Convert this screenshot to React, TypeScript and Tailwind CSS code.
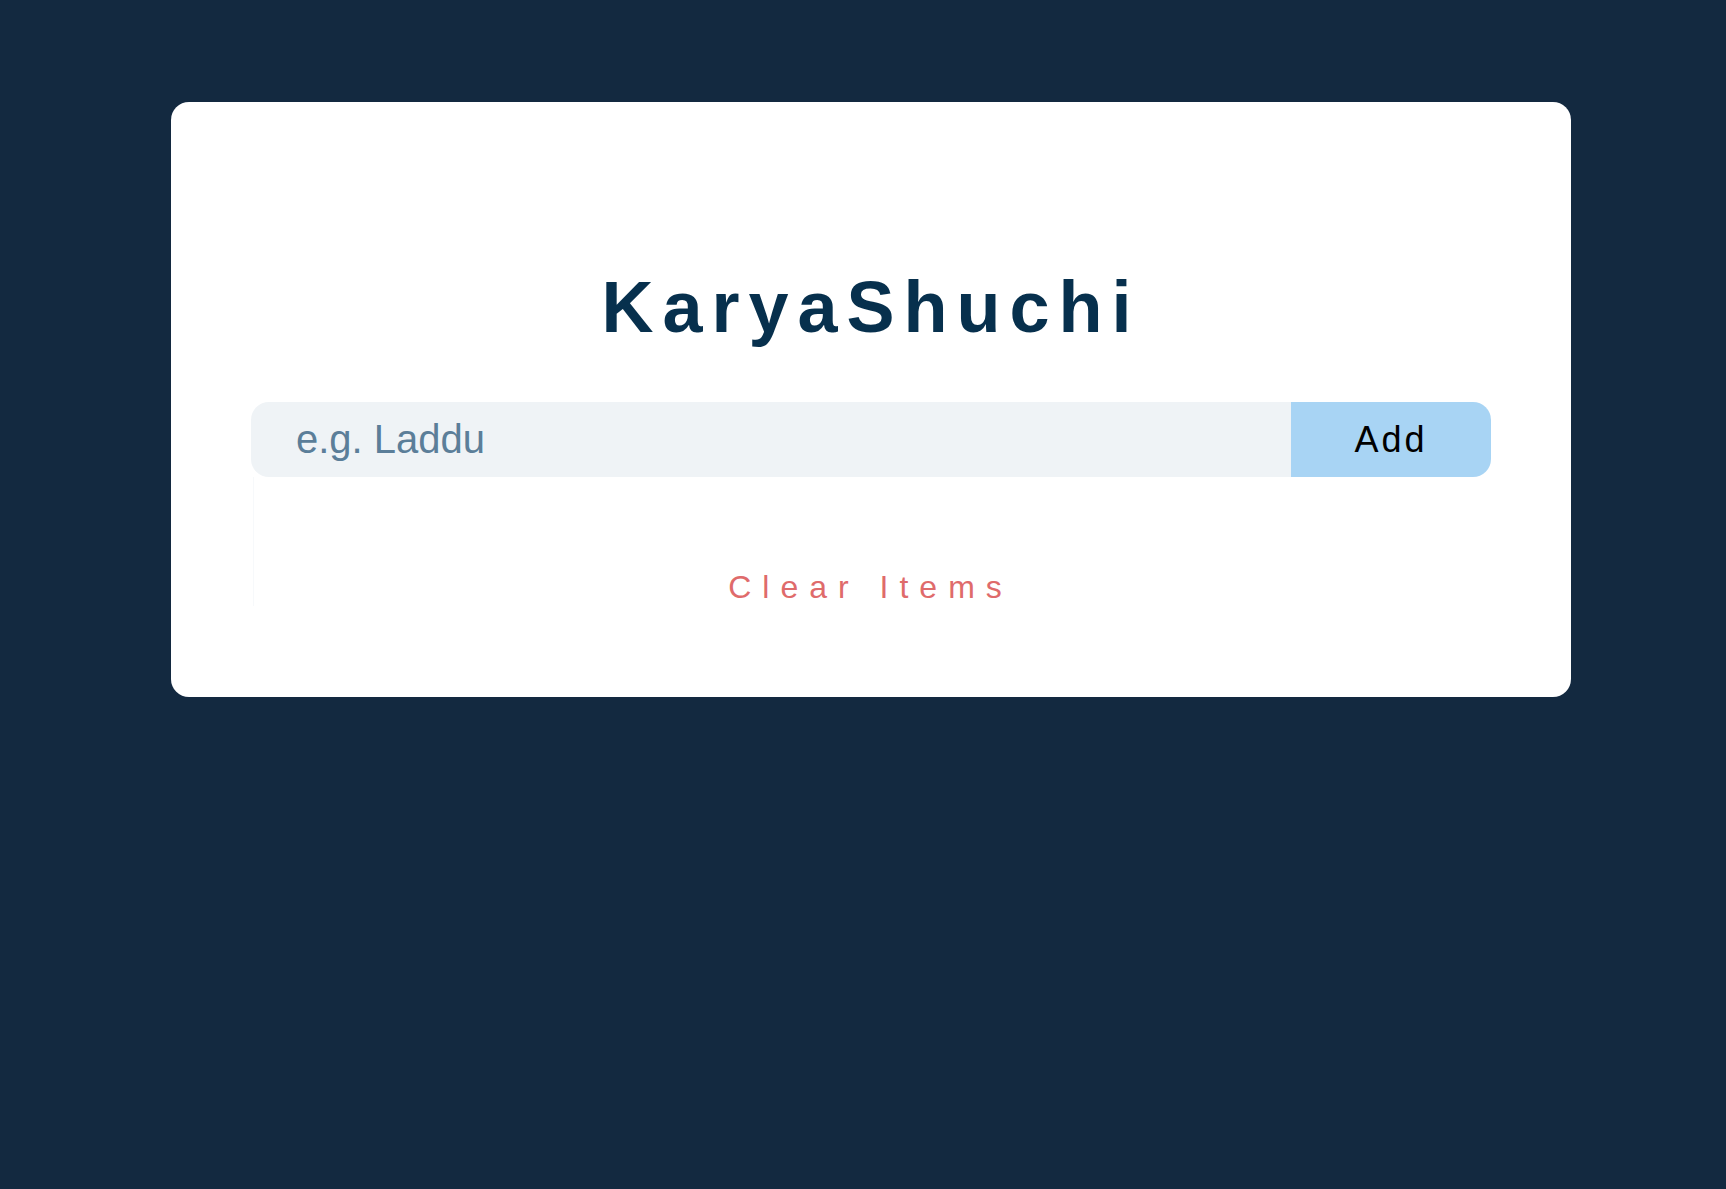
import { useState } from "react";

export default function App() {
  const [item, setItem] = useState<string>("");
  const [itens, setItens] = useState<string[]>([]);

  const adicionar = () => {
    if (!item.trim()) return;
    setItens((prev) => [...prev, item.trim()]);
    setItem("");
  };

  return (
    <div
      className="min-h-screen bg-[#132940] pl-[171px] pt-[102px]"
      style={{ fontFamily: '"Liberation Sans", Arial, sans-serif' }}
    >
      <div className="w-[1400px] rounded-[18px] bg-white px-20 pt-[164px] pb-[91px]">
        <h1 className="text-center text-[72px] leading-[83px] font-bold tracking-[9px] text-[#07304d]">
          KaryaShuchi
        </h1>

        {/* Formulario */}
        <div className="mt-[53px] flex h-[75px]">
          <input
            type="text"
            value={item}
            onChange={(e) => setItem(e.target.value)}
            placeholder="e.g. Laddu"
            className="h-full flex-1 rounded-l-[18px] bg-[#eff3f6] pl-[45px] text-[40px] text-[#07304d] outline-none placeholder:text-[#5b7e99]"
          />
          <button
            onClick={adicionar}
            className="h-full w-[200px] rounded-r-[18px] bg-[#a8d4f4] text-[36px] tracking-[3px] text-black"
          >
            Add
          </button>
        </div>

        {/* Lista */}
        <div className="ml-[2px] border-l border-[#f7f9fb]">
          <ul className="min-h-[92px]">
            {itens.map((i, idx) => (
              <li key={idx} className="py-2 pl-[45px] text-[32px] text-[#07304d]">
                {i}
              </li>
            ))}
          </ul>
          <button
            onClick={() => setItens([])}
            className="-ml-[2px] block w-full text-center text-[32px] leading-[37px] tracking-[11px] text-[#df6b6b]"
          >
            Clear Items
          </button>
        </div>
      </div>
    </div>
  );
}
